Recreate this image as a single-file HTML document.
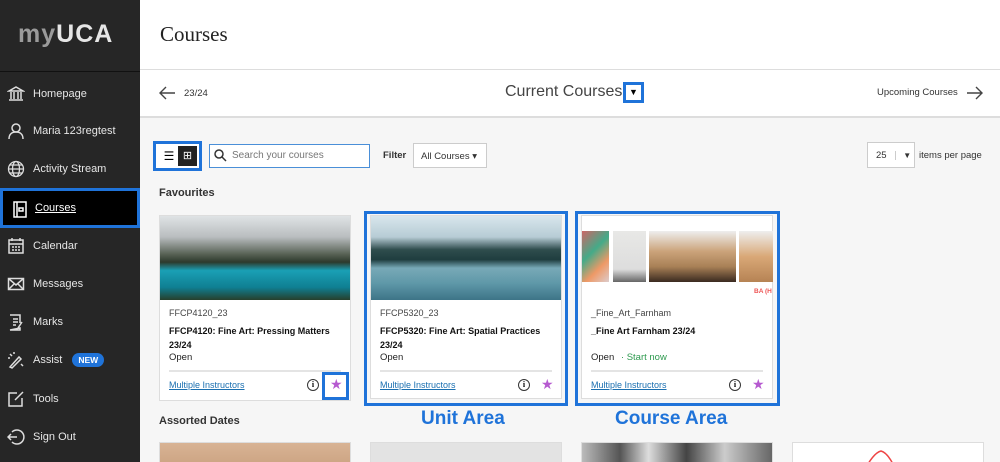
<!DOCTYPE html>
<html><head><style>
*{margin:0;padding:0;box-sizing:border-box}
html,body{width:1000px;height:462px;overflow:hidden}
body{font-family:"Liberation Sans",sans-serif;background:#f6f6f6;position:relative}
.sb{position:absolute;left:0;top:0;width:140px;height:462px;background:#262626;color:#e6e6e6}
.logo{height:72px;border-bottom:1px solid #111;font-size:25px;font-weight:bold;padding:20px 0 0 18px;letter-spacing:1px}
.nav{position:absolute;left:0;width:140px;height:38px;font-size:11px;display:flex;align-items:center;padding-left:33px}
.ic{position:absolute;left:7px;top:10px;width:18px;height:18px}
.main{position:absolute;left:140px;top:0;right:0}
.hdr{height:70px;background:#fff;border-bottom:1px solid #ddd}
.bar{height:48px;background:#fff;border-bottom:2px solid #ddd;position:relative}
.card{position:absolute;width:192px;height:186px;background:#fff;border:1px solid #ddd}
.card .img{height:84px}
.code{position:absolute;left:9px;top:92px;font-size:9px;color:#444}
.ttl{position:absolute;left:9px;top:108px;font-size:9px;font-weight:bold;color:#111;width:175px;line-height:14px}
.open{position:absolute;left:9px;top:136px;font-size:9.5px;color:#222}
.hr{position:absolute;left:9px;right:9px;top:154px;border-top:2px solid #e4e4e4}
.mi{position:absolute;left:9px;top:164px;font-size:9px;color:#1a6fb0;text-decoration:underline}
.info{position:absolute;left:147px;top:163px;width:12px;height:12px;border:1.3px solid #333;border-radius:50%;font-size:8px;text-align:center;line-height:10px;font-weight:bold;font-family:"Liberation Serif",serif}
.star{position:absolute;left:170px;top:160px;color:#b65ad0;font-size:14px}
.bx{position:absolute;border:3px solid #1f73d9}
.lbl{position:absolute;color:#1f73d9;font-weight:bold;font-size:19px}
</style></head><body>
<div class="sb">
<div class="logo"><span style="color:#9a9a9a">my</span>UCA</div>
<div class="nav" style="top:75px"><svg class="ic" viewBox="0 0 18 18" fill="none" stroke="#ddd" stroke-width="1.5"><path d="M2 6L9 2L16 6ZM2 6H16M4 7V14M7 7V14M11 7V14M14 7V14M2 15H16"/></svg>Homepage</div>
<div class="nav" style="top:112px"><svg class="ic" viewBox="0 0 18 18" fill="none" stroke="#ddd" stroke-width="1.5"><circle cx="9" cy="6" r="4"/><path d="M2 17C2 12 5 10 9 10S16 12 16 17"/></svg>Maria 123regtest</div>
<div class="nav" style="top:150px"><svg class="ic" viewBox="0 0 18 18" fill="none" stroke="#ddd" stroke-width="1.3"><circle cx="9" cy="9" r="7.5"/><ellipse cx="9" cy="9" rx="3.5" ry="7.5"/><path d="M1.5 9H16.5M3 5H15M3 13H15"/></svg>Activity Stream</div>
<div class="nav" style="top:188px;height:40px;background:#000;border:3px solid #1f73d9;color:#fff;text-decoration:underline;padding-left:32px"><svg class="ic" style="left:8px;top:9px" viewBox="0 0 18 18" fill="none" stroke="#fff" stroke-width="1.5"><rect x="3" y="2" width="12" height="15"/><path d="M6 2V17M8 8H12V11H8Z"/></svg>Courses</div>
<div class="nav" style="top:227px"><svg class="ic" viewBox="0 0 18 18" fill="none" stroke="#ddd" stroke-width="1.5"><rect x="2" y="3" width="14" height="13"/><path d="M2 7H16M5 1V4M13 1V4M5 10H7M8 10H10M11 10H13M5 13H7M8 13H10M11 13H13"/></svg>Calendar</div>
<div class="nav" style="top:265px"><svg class="ic" viewBox="0 0 18 18" fill="none" stroke="#ddd" stroke-width="1.5"><rect x="1.5" y="3.5" width="15" height="11"/><path d="M1.5 3.5L9 10L16.5 3.5M1.5 14.5L7 9M16.5 14.5L11 9"/></svg>Messages</div>
<div class="nav" style="top:303px"><svg class="ic" viewBox="0 0 18 18" fill="none" stroke="#ddd" stroke-width="1.5"><path d="M3 2H13V10M13 15V17H3Z M6 6H11M6 9H11M6 12H9M15 9L11 15"/></svg>Marks</div>
<div class="nav" style="top:341px"><svg class="ic" viewBox="0 0 18 18" fill="none" stroke="#ddd" stroke-width="1.5"><path d="M3 16L12 6L14 8L5 17ZM3 3L5 5M7 1V3M1 7H3M14 13L16 15"/></svg>Assist<span style="margin-left:10px;background:#1f73d9;color:#fff;font-weight:bold;font-size:8.5px;padding:2px 6px;border-radius:8px">NEW</span></div>
<div class="nav" style="top:380px"><svg class="ic" viewBox="0 0 18 18" fill="none" stroke="#ddd" stroke-width="1.5"><path d="M10 3H2V16H15V8M8 10L16 2"/></svg>Tools</div>
<div class="nav" style="top:418px"><svg class="ic" viewBox="0 0 18 18" fill="none" stroke="#ddd" stroke-width="1.5"><path d="M5 4A7 7 0 1 1 5 14M1 9H10M4 6L1 9L4 12"/></svg>Sign Out</div>
</div>
<div class="main">
<div class="hdr"><div style="position:absolute;left:20px;top:22px;font-size:21px;color:#222;font-family:'Liberation Serif',serif">Courses</div></div>
<div class="bar">
<svg style="position:absolute;left:18px;top:14px" width="18" height="18" viewBox="0 0 18 18" fill="none" stroke="#444" stroke-width="1.4"><path d="M17 9H2M8 3L2 9L8 15"/></svg>
<div style="position:absolute;left:44px;top:18px;font-size:9.5px;color:#333">23/24</div>
<div style="position:absolute;left:365px;top:13px;font-size:16px;color:#444">Current Courses</div>
<div style="position:absolute;left:483px;top:12px;width:21px;height:21px;border:3px solid #1f73d9;background:#fff;font-size:9px;text-align:center;line-height:15px">▼</div>
<div style="position:absolute;left:737px;top:17px;font-size:9.5px;color:#333">Upcoming Courses</div>
<svg style="position:absolute;left:826px;top:14px" width="18" height="18" viewBox="0 0 18 18" fill="none" stroke="#444" stroke-width="1.4"><path d="M1 9H16M10 3L16 9L10 15"/></svg>
</div>
</div>
<div class="bx" style="left:153px;top:141px;width:49px;height:30px;background:#fff"></div>
<div style="position:absolute;left:159px;top:146px;width:20px;height:20px;font-size:12px;text-align:center;line-height:20px">☰</div>
<div style="position:absolute;left:178px;top:146px;width:19px;height:20px;background:#222;color:#fff;font-size:11px;text-align:center;line-height:20px">⊞</div>
<div style="position:absolute;left:209px;top:144px;width:161px;height:24px;border:1px solid #4a8fd8;background:#fff;font-size:10px;color:#777;padding:5px 0 0 22px">Search your courses</div>
<svg style="position:absolute;left:214px;top:149px" width="13" height="13" viewBox="0 0 13 13" fill="none" stroke="#333" stroke-width="1.5"><circle cx="5" cy="5" r="4"/><path d="M8 8L12 12"/></svg>
<div style="position:absolute;left:383px;top:150px;font-size:9.5px;font-weight:bold;color:#333">Filter</div>
<div style="position:absolute;left:413px;top:143px;width:74px;height:25px;border:1px solid #ccc;background:#fff;font-size:9.5px;color:#333;padding:7px 0 0 7px">All Courses ▾</div>
<div style="position:absolute;left:867px;top:142px;width:48px;height:26px;border:1px solid #ccc;background:#fff;font-size:9.5px;color:#333;padding:7px 0 0 8px">25 <span style="border-left:1px solid #ccc;margin-left:6px;padding-left:7px;font-size:8px">▼</span></div>
<div style="position:absolute;left:919px;top:150px;font-size:9.5px;color:#333">items per page</div>
<div style="position:absolute;left:159px;top:187px;font-size:11px;font-weight:bold;color:#333">Favourites</div>

<div class="card" style="left:159px;top:215px"><div class="img" style="background:linear-gradient(180deg,#dfe3e5 0%,#b9bdbf 25%,#5a6457 45%,#2d3a2c 55%,#1aa0b5 65%,#0f7f92 85%,#27402c 100%)"></div>
<div class="code">FFCP4120_23</div><div class="ttl">FFCP4120: Fine Art: Pressing Matters 23/24</div><div class="open">Open</div><div class="hr"></div><div class="mi">Multiple Instructors</div><div class="info">i</div><div class="star">★</div></div>
<div class="bx" style="left:322px;top:372px;width:27px;height:28px"></div>

<div class="bx" style="left:364px;top:211px;width:204px;height:195px"></div>
<div class="card" style="left:370px;top:215px;height:184px"><div class="img" style="background:linear-gradient(180deg,#d8e6ec 0%,#b7ccd5 25%,#2f4d4d 40%,#1f3d3f 52%,#78a9b7 62%,#5f98a8 80%,#3d7487 100%)"></div>
<div class="code">FFCP5320_23</div><div class="ttl">FFCP5320: Fine Art: Spatial Practices 23/24</div><div class="open">Open</div><div class="hr"></div><div class="mi">Multiple Instructors</div><div class="info">i</div><div class="star">★</div></div>

<div class="bx" style="left:575px;top:211px;width:205px;height:195px"></div>
<div class="card" style="left:581px;top:215px;height:184px"><div class="img" style="position:relative;background:#fff">
<div style="position:absolute;left:0;top:15px;width:27px;height:51px;background:linear-gradient(135deg,#c66 0%,#4a8 40%,#e96 70%,#dcc 100%)"></div>
<div style="position:absolute;left:31px;top:15px;width:33px;height:51px;background:linear-gradient(180deg,#e8e8e6 0%,#ddd 75%,#666 100%)"></div>
<div style="position:absolute;left:67px;top:15px;width:87px;height:51px;background:linear-gradient(180deg,#eee 0%,#cba37a 40%,#a88056 70%,#3a2a20 100%)"></div>
<div style="position:absolute;left:157px;top:15px;width:34px;height:51px;background:linear-gradient(180deg,#eee 0%,#d9a877 50%,#b68354 100%)"></div>
<div style="position:absolute;left:172px;top:72px;font-size:6.5px;font-weight:bold;color:#e55">BA (H</div></div>
<div class="code" style="top:92px">_Fine_Art_Farnham</div><div class="ttl">_Fine Art Farnham 23/24</div><div class="open">Open <span style="color:#2e9a4f;margin-left:4px">· Start now</span></div><div class="hr"></div><div class="mi">Multiple Instructors</div><div class="info">i</div><div class="star">★</div></div>

<div class="lbl" style="left:421px;top:408px">Unit Area</div>
<div class="lbl" style="left:615px;top:408px">Course Area</div>
<div style="position:absolute;left:159px;top:415px;font-size:11px;font-weight:bold;color:#333">Assorted Dates</div>
<div style="position:absolute;left:159px;top:442px;width:192px;height:30px;border:1px solid #ddd;background:linear-gradient(180deg,#d8b394,#c9a07e)"></div>
<div style="position:absolute;left:370px;top:442px;width:192px;height:30px;border:1px solid #ddd;background:#e3e3e3"></div>
<div style="position:absolute;left:581px;top:442px;width:192px;height:30px;border:1px solid #ddd;background:linear-gradient(90deg,#bbb,#555 20%,#ddd 35%,#444 55%,#ccc 75%,#666)"></div>
<div style="position:absolute;left:792px;top:442px;width:192px;height:30px;border:1px solid #ddd;background:#fff"><svg width="190" height="30"><path d="M70 30Q80 10 88 8Q96 10 104 30M60 22Q90 18 120 22" stroke="#e44" fill="none" stroke-width="1.5"/></svg></div>
</body></html>
